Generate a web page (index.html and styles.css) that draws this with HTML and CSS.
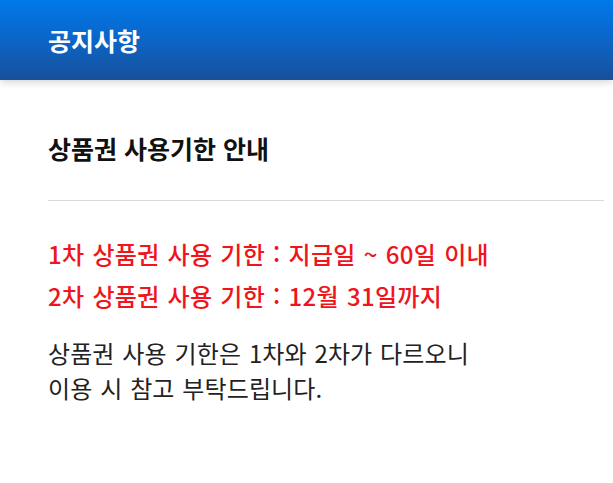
FILE: index.html
```html
<!DOCTYPE html>
<html lang="ko">
<head>
<meta charset="utf-8">
<title>공지사항</title>
<link rel="stylesheet" href="styles.css">
</head>
<body>
<header class="topbar">
  <h1 class="topbar-title">공지사항</h1>
</header>
<main class="notice">
  <h2 class="notice-title">상품권 사용기한 안내</h2>
  <hr class="notice-divider">
  <div class="notice-periods">
    <p>1차 상품권 사용 기한 : 지급일 ~ 60일 이내</p>
    <p>2차 상품권 사용 기한 : 12월 31일까지</p>
  </div>
  <p class="notice-body">상품권 사용 기한은 1차와 2차가 다르오니<br>이용 시 참고 부탁드립니다.</p>
</main>
</body>
</html>
```
FILE: styles.css
```css
* { box-sizing: border-box; }

html, body {
  margin: 0;
  padding: 0;
  background: #ffffff;
}

body {
  font-family: "Noto Sans CJK KR", "Noto Sans", sans-serif;
  color: #1a1a1a;
}

.topbar {
  height: 80px;
  display: flex;
  align-items: center;
  padding-left: 48px;
  background: linear-gradient(to bottom, #0079e8 0%, #0a67cc 45%, #18509a 100%);
  box-shadow: 0 2px 8px rgba(0, 0, 0, 0.18);
  position: relative;
}

.topbar-title {
  margin: 0;
  font-size: 25px;
  font-weight: 700;
  color: #ffffff;
  line-height: 30px;
}

.notice {
  padding: 0 9px 0 48px;
}

.notice-title {
  margin: 53px 0 0;
  font-size: 25px;
  font-weight: 700;
  line-height: 30px;
  color: #111111;
}

.notice-divider {
  margin: 37px 0 0;
  border: 0;
  height: 1px;
  background: #d9d9d9;
}

.notice-periods {
  margin-top: 32px;
  color: #f0141c;
}

.notice-periods p {
  margin: 0;
  font-size: 24px;
  font-weight: 500;
  line-height: 42px;
  letter-spacing: 0.3px;
  word-spacing: 1px;
}

.notice-body {
  margin: 18px 0 0;
  font-size: 24px;
  line-height: 35px;
  color: #222222;
  letter-spacing: 0.1px;
  word-spacing: 1px;
}
```
